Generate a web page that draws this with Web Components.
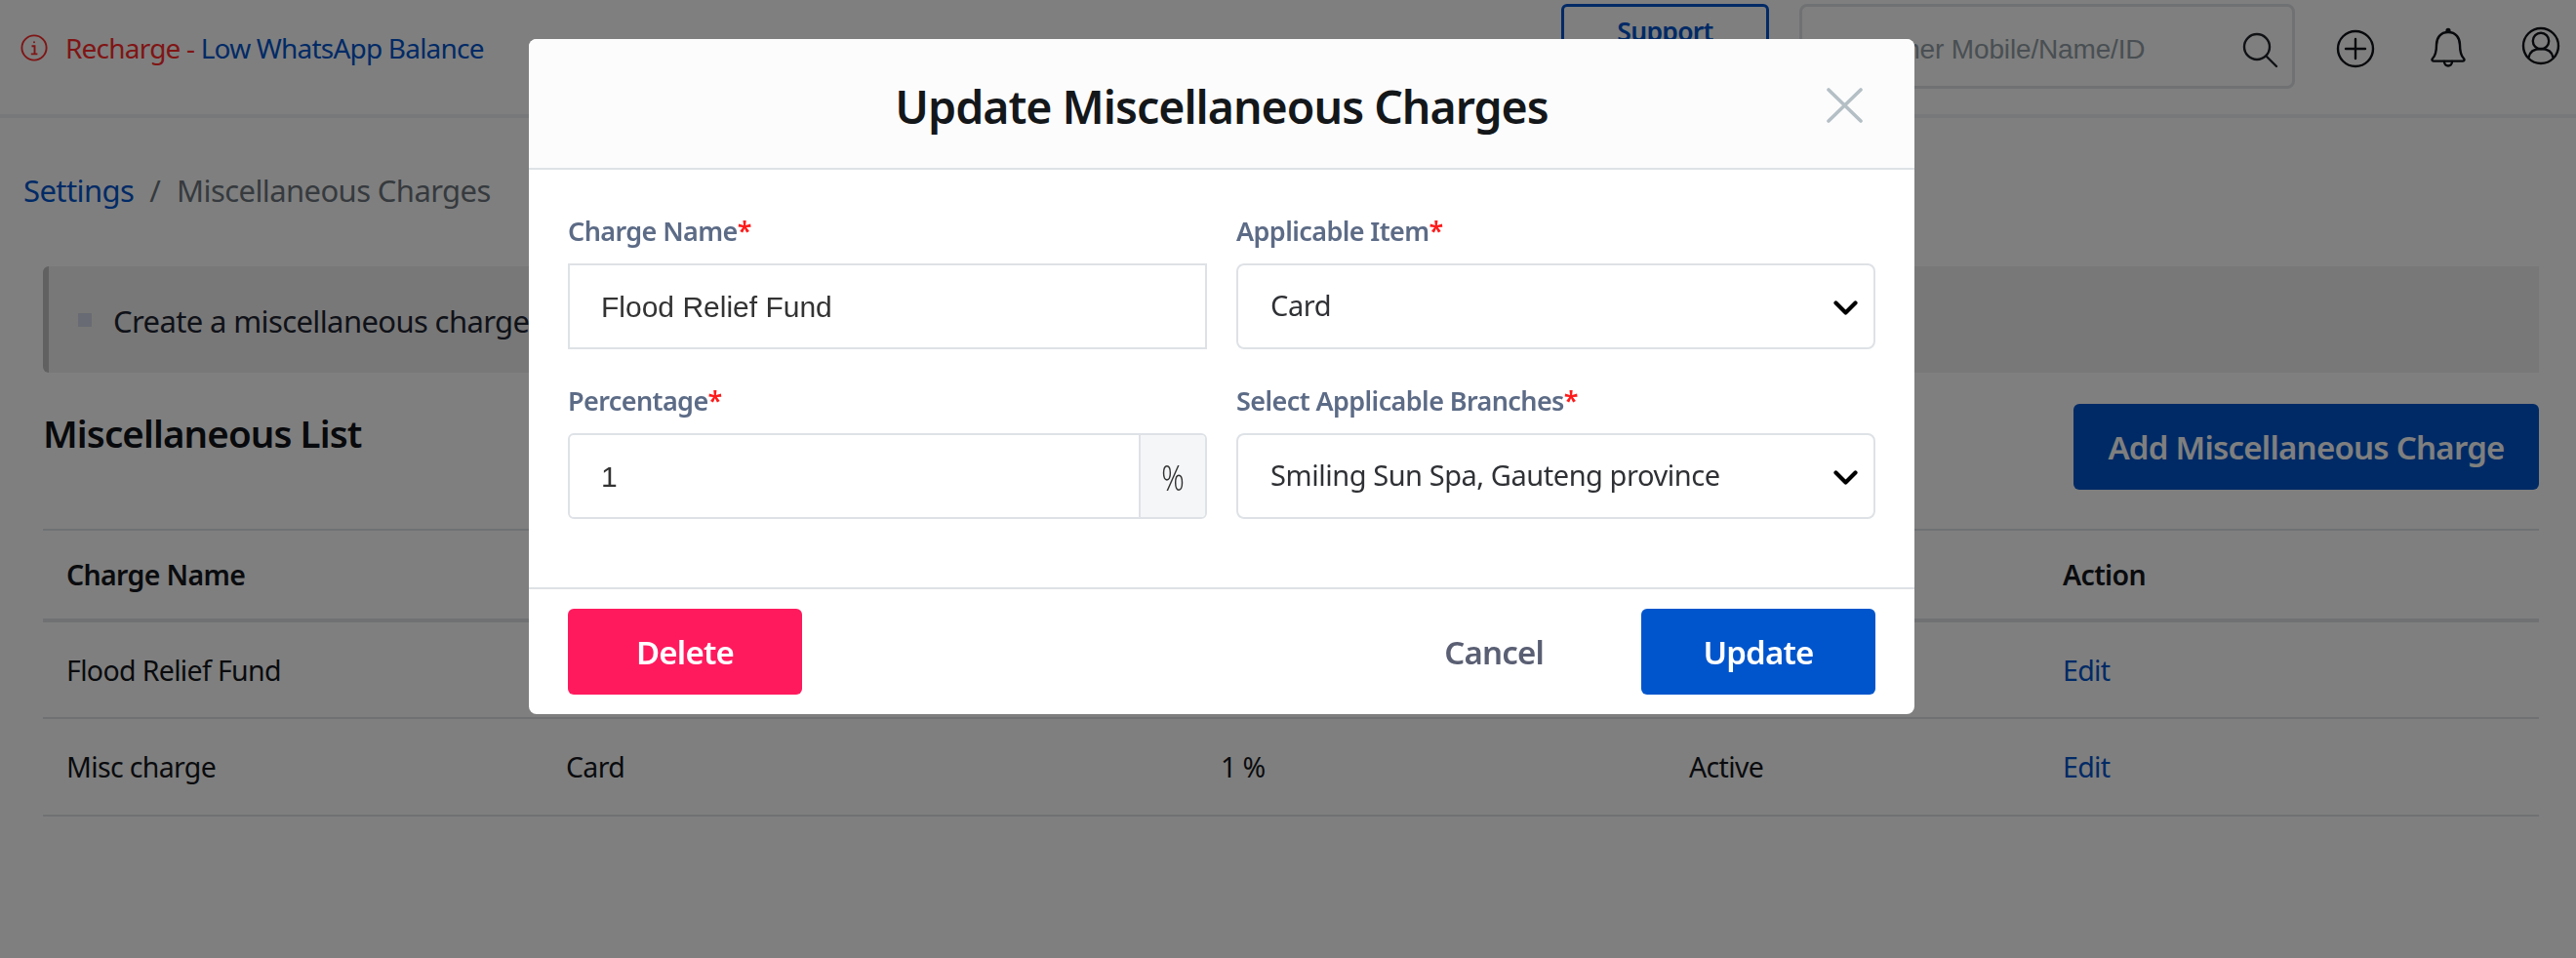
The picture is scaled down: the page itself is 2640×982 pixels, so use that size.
<!DOCTYPE html>
<html lang="en">
<head>
<meta charset="utf-8">
<title>Miscellaneous Charges</title>
<style>
html,body{margin:0;height:100%;background:#fff;}
body{font-family:"Noto Sans",sans-serif;color:#111318;overflow:hidden;}
</style>
</head>
<body>
<app-nav></app-nav>
<crumb-bar></crumb-bar>
<info-note>Create a miscellaneous charge</info-note>
<list-head></list-head>
<charge-table>
  <charge-row head><span>Charge Name</span><span></span><span></span><span></span><span>Action</span></charge-row>
  <charge-row><span>Flood Relief Fund</span><span></span><span></span><span></span><a>Edit</a></charge-row>
  <charge-row><span>Misc charge</span><span>Card</span><span>1 %</span><span>Active</span><a>Edit</a></charge-row>
</charge-table>

<update-modal>
  <form-field label="Charge Name"><text-box square>Flood Relief Fund</text-box></form-field>
  <form-field label="Applicable Item"><select-box>Card</select-box></form-field>
  <form-field label="Percentage"><text-box addon="%">1</text-box></form-field>
  <form-field label="Select Applicable Branches"><select-box>Smiling Sun Spa, Gauteng province</select-box></form-field>
</update-modal>

<script>
function define(name, html, extra) {
  const template = document.createElement("template");
  template.innerHTML = html;
  class El extends HTMLElement {
    constructor() {
      super();
      this.attachShadow({ mode: "open" });
      this.shadowRoot.appendChild(template.content.cloneNode(true));
      if (extra) extra(this);
    }
  }
  customElements.define(name, El);
}

define("app-nav", `
<style>
:host{display:flex;height:117px;border-bottom:4px solid #eef0f2;padding-left:21px;padding-right:16px;}
.notice{display:flex;align-items:center;height:98px;font-size:28px;letter-spacing:-.8px;color:#ff2b2b;gap:18px;}
.notice a{color:#0055cc;}
.notice svg{width:28px;height:28px;flex:none;}
.right{margin-left:auto;display:flex;align-items:flex-start;padding-top:4px;}
.support{width:213px;height:87px;box-sizing:border-box;border:3px solid #0055cc;border-radius:6px;text-align:center;font-size:26.5px;font-weight:600;letter-spacing:-.7px;color:#0055cc;line-height:50px;margin-right:31px;}
.search{width:508px;height:87px;box-sizing:border-box;border:3px solid #dee2e6;border-radius:8px;display:flex;align-items:center;padding:0 13px 0 25px;font:28px "Liberation Sans",sans-serif;color:#939ea6;letter-spacing:-.15px;}
.search span{padding-top:7px;}
.search svg{margin-left:auto;width:38px;height:40px;margin-top:11px;}
.ico{display:flex;align-items:center;height:87px;}
</style>
<div class="notice">
  <svg viewBox="0 0 28 28" fill="none" stroke="#ff2b2b" stroke-width="1.9"><circle cx="14" cy="14" r="12.6"/><path d="M11.5 12.2h3v8M10.8 20.4h6.6"/><circle cx="14" cy="8.2" r="1" fill="#ff2b2b" stroke="none"/></svg>
  <div>Recharge - <a>Low WhatsApp Balance</a></div>
</div>
<div class="right">
  <div class="support">Support</div>
  <div class="search"><span>Customer Mobile/Name/ID</span>
    <svg viewBox="0 0 38 40" fill="none" stroke="#20242a" stroke-width="2.4" stroke-linecap="round"><circle cx="15" cy="15" r="13"/><path d="M25 25l10 10"/></svg>
  </div>
  <div class="ico" style="margin-left:42px"><svg width="40" height="40" viewBox="0 0 40 40" fill="none" stroke="#111318" stroke-width="2.4" stroke-linecap="round" style="margin-top:4px"><circle cx="20" cy="20" r="18"/><path d="M20 10v20M10 20h20"/></svg></div>
  <div class="ico" style="margin-left:56px"><svg width="38" height="42" viewBox="0 0 38 42" fill="none" stroke="#111318" stroke-width="2.4" stroke-linejoin="round" stroke-linecap="round" style="margin-top:2px"><circle cx="19" cy="3.4" r="1.4" fill="#111318"/><path d="M19 5c-8 0-12 6-12 13 0 7-1 11-4 14-1 1-.7 2.600 1 2.600h30c1.700 0 2-1.600 1-2.600-3-3-4-7-4-14 0-7-4-13-12-13z"/><path d="M15 35c0 6 8 6 8 0"/></svg></div>
  <div class="ico" style="margin-left:56px"><svg width="40" height="40" viewBox="0 0 40 40" fill="none" stroke="#111318" stroke-width="2.4" style="margin-top:-2px"><circle cx="20" cy="20" r="18"/><circle cx="20" cy="15" r="8.200"/><path d="M7.500 32c1-6 6-9 12.500-9s11.500 3 12.500 9"/></svg></div>
</div>`);

define("crumb-bar", `
<style>
:host{display:flex;align-items:center;height:40px;margin:54px 0 0 24px;font-size:31px;letter-spacing:-.6px;color:#6c757d;}
a{color:#0055cc;}
i{font-style:normal;margin:0 17px 0 16px;}
</style>
<a>Settings</a><i>/</i><span>Miscellaneous Charges</span>`);

define("info-note", `
<style>
:host{display:flex;align-items:center;height:109px;margin:58px 38px 0 44px;box-sizing:border-box;background:#f0f0f0;border-left:6px solid #c2c2c2;border-radius:6px 0 0 6px;padding-left:30px;font-size:31px;letter-spacing:-.62px;color:#1f2430;}
b{width:14px;height:14px;background:#d0d6e6;margin-right:22px;flex:none;}
.t{padding-top:2px;}
</style>
<b></b><div class="t"><slot></slot></div>`);

define("list-head", `
<style>
:host{display:flex;align-items:flex-start;height:128px;margin:32px 38px 0 44px;}
h2{margin:0;font-size:38.5px;font-weight:600;line-height:60px;letter-spacing:-.9px;color:#111318;}
a{margin-left:auto;width:477px;height:88px;background:#0055cc;color:#fff;border-radius:6px;font-size:33px;font-weight:600;letter-spacing:-.75px;display:flex;align-items:center;justify-content:center;}
</style>
<h2>Miscellaneous List</h2><a>Add Miscellaneous Charge</a>`);

define("charge-table", `
<style>
:host{display:block;margin:0 38px 0 44px;border-top:2px solid #dee2e6;}
</style>
<slot></slot>`);

define("charge-row", `
<style>
:host{display:grid;grid-template-columns:512px 671px 480px 383px 1fr;align-items:center;height:97px;border-bottom:2px solid #dee2e6;font-size:28.5px;letter-spacing:-.65px;color:#14171c;padding-left:24px;}
:host([head]){height:90px;border-bottom-width:4px;font-weight:600;}
:host(:last-child){height:98px;}
::slotted(a){color:#0055cc;}
</style>
<slot></slot>`);

define("form-field", `
<style>
:host{display:block;}
.lbl{height:40px;line-height:40px;margin-bottom:13px;font-size:27px;font-weight:600;letter-spacing:-.6px;color:#5c6b86;}
.lbl i{font-style:normal;color:#ff1a1a;}
</style>
<div class="lbl"><span class="t"></span><i>*</i></div>
<slot></slot>`, el => {
  el.shadowRoot.querySelector(".t").textContent = el.getAttribute("label");
});

define("text-box", `
<style>
:host{display:flex;height:88px;box-sizing:border-box;border:2px solid #dee2e6;border-radius:6px;background:#fff;align-items:stretch;font:30px "Liberation Sans",sans-serif;color:#333;overflow:hidden;}
:host([square]){border-radius:0;}
.v{flex:1;padding:2px 0 0 32px;display:flex;align-items:center;}
.a{width:68px;box-sizing:border-box;background:#f5f6f8;border-left:2px solid #dee2e6;display:flex;align-items:center;justify-content:center;font:300 29px "Noto Sans",sans-serif;}
.a span{display:inline-block;transform:scaleY(1.25);}
</style>
<div class="v"><slot></slot></div>`, el => {
  const addon = el.getAttribute("addon");
  if (addon) {
    const d = document.createElement("div");
    d.className = "a";
    d.innerHTML = `<span>${addon}</span>`;
    el.shadowRoot.appendChild(d);
  }
});

define("select-box", `
<style>
:host{display:flex;align-items:center;height:88px;box-sizing:border-box;border:2px solid #dee2e6;border-radius:8px;background:#fff;padding:0 16px 0 33px;font-size:29px;letter-spacing:-.45px;color:#2f3135;}
.v{margin-top:-3px;}
svg{margin-left:auto;width:25px;height:15px;margin-top:2px;}
</style>
<div class="v"><slot></slot></div>
<svg viewBox="0 0 25 15" fill="none" stroke="#000" stroke-width="4.200" stroke-linecap="round" stroke-linejoin="round"><path d="M2.500 2.500l10 10 10-10"/></svg>`);

define("update-modal", `
<style>
:host{position:fixed;inset:0;background:rgba(0,0,0,.5);display:block;padding:40px 0 0 542px;}
.dlg{width:1420px;height:692px;background:#fff;border-radius:8px;display:flex;flex-direction:column;overflow:hidden;}
header{height:132px;box-sizing:content-box;background:#fcfcfd;border-bottom:2px solid #dee2e6;display:flex;align-items:center;justify-content:center;position:relative;flex:none;}
h1{margin:0;padding-top:6px;font-size:46.5px;font-weight:600;letter-spacing:-1px;color:#14171a;}
header svg{position:absolute;left:1330px;top:50px;width:37px;height:36px;}
.body{flex:1;padding:43px 40px 0;display:grid;grid-template-columns:655px 655px;column-gap:30px;row-gap:33px;align-content:start;}
footer{height:130px;box-sizing:border-box;border-top:2px solid #dee2e6;padding:20px 40px;display:flex;align-items:stretch;font-size:33px;font-weight:600;letter-spacing:-.8px;flex:none;}
.btn{width:240px;border-radius:6px;color:#fff;display:flex;align-items:center;justify-content:center;}
.del{background:#ff1a5e;}
.upd{background:#0055cc;}
.can{margin-left:auto;margin-right:100px;color:#5a5f73;display:flex;align-items:center;}
</style>
<div class="dlg">
  <header><h1>Update Miscellaneous Charges</h1>
    <svg viewBox="0 0 37 36" fill="none" stroke="#b4bfc5" stroke-width="3.600" stroke-linecap="round"><path d="M2 2l33 32M35 2L2 34"/></svg>
  </header>
  <div class="body"><slot></slot></div>
  <footer><div class="btn del">Delete</div><div class="can">Cancel</div><div class="btn upd">Update</div></footer>
</div>`);
</script>
</body>
</html>
